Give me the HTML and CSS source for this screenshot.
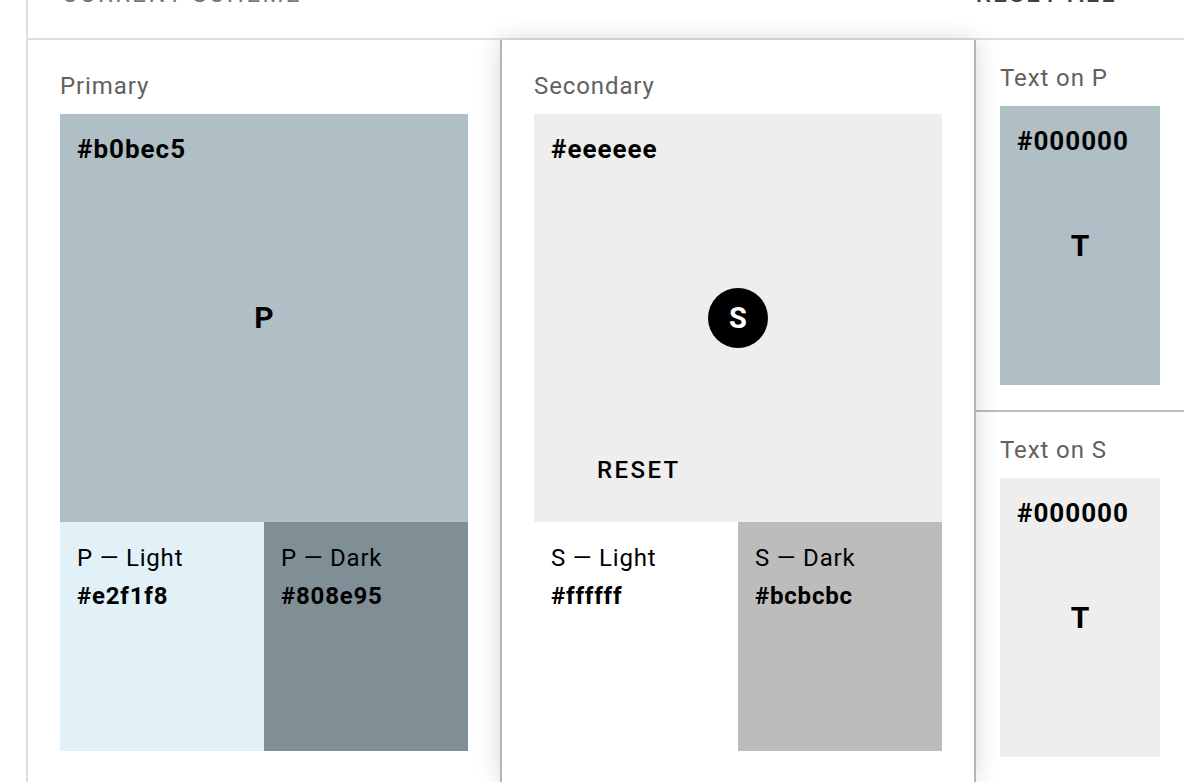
FILE: index.html
```html
<!DOCTYPE html>
<html lang="en">
<head>
<meta charset="utf-8">
<title>Current scheme</title>
<link rel="stylesheet" href="styles.css">
</head>
<body>
<div class="page">
  <header class="header">
    <span class="title">Current scheme</span>
    <span class="reset-all">Reset all</span>
  </header>
  <div class="columns">
    <section class="col col-primary">
      <div class="label">Primary</div>
      <div class="swatch-main c-primary">
        <span class="hex">#b0bec5</span>
        <span class="center-letter">P</span>
      </div>
      <div class="swatch-row">
        <div class="swatch-sub c-plight"><div>P — Light</div><div class="hex-b">#e2f1f8</div></div>
        <div class="swatch-sub c-pdark"><div>P — Dark</div><div class="hex-b">#808e95</div></div>
      </div>
    </section>
    <section class="col col-secondary">
      <div class="label">Secondary</div>
      <div class="swatch-main c-secondary">
        <span class="hex">#eeeeee</span>
        <span class="circle">S</span>
        <span class="reset">Reset</span>
      </div>
      <div class="swatch-row">
        <div class="swatch-sub c-slight"><div>S — Light</div><div class="hex-b">#ffffff</div></div>
        <div class="swatch-sub c-sdark"><div>S — Dark</div><div class="hex-b">#bcbcbc</div></div>
      </div>
    </section>
    <section class="col-text">
      <div class="text-block first">
        <div class="label">Text on P</div>
        <div class="swatch-text c-primary">
          <span class="hex">#000000</span>
          <span class="center-letter">T</span>
        </div>
      </div>
      <div class="text-block second">
        <div class="label">Text on S</div>
        <div class="swatch-text c-secondary">
          <span class="hex">#000000</span>
          <span class="center-letter">T</span>
        </div>
      </div>
    </section>
  </div>
</div>
</body>
</html>
```

FILE: styles.css
```css
* { box-sizing: border-box; }

html, body {
  margin: 0;
  padding: 0;
  background: #ffffff;
}

body {
  font-family: Roboto, "Noto Sans", "Liberation Sans", sans-serif;
  color: #000;
  height: 782px;
  overflow: hidden;
}

.page {
  margin-left: 26px;
  border-left: 2px solid #e0e0e0;
  height: 782px;
  overflow: hidden;
}

.header {
  height: 40px;
  border-bottom: 2px solid #e0e0e0;
  display: flex;
  justify-content: space-between;
  align-items: flex-start;
  padding: 0 67px 0 34px;
}

.title,
.reset-all {
  text-transform: uppercase;
  font-size: 24px;
  line-height: 32px;
  margin-top: -22px;
}

.title {
  color: #757575;
  letter-spacing: 2.4px;
}

.reset-all {
  color: #424242;
  font-weight: 500;
  letter-spacing: 2.5px;
}

.columns {
  display: flex;
  align-items: stretch;
  height: 742px;
}

.col {
  padding: 30px 32px 0;
}

.col-primary {
  width: 472px;
}

.col-secondary {
  width: 476px;
  border-left: 2px solid #b5b5b5;
  border-right: 2px solid #b5b5b5;
  box-shadow: 0 0 22px rgba(0, 0, 0, 0.16);
  position: relative;
  z-index: 1;
}

.col-text {
  flex: 1;
  display: flex;
  flex-direction: column;
}

.label {
  font-size: 24px;
  line-height: 32px;
  color: #616161;
  letter-spacing: 0.9px;
  margin-bottom: 12px;
}

.swatch-main {
  width: 408px;
  height: 408px;
  display: grid;
  grid-template: 1fr / 1fr;
}

.swatch-main > *,
.swatch-text > * {
  grid-area: 1 / 1;
}

.hex {
  align-self: start;
  justify-self: start;
  padding: 16px 17px 0;
  font-size: 26px;
  line-height: 38px;
  font-weight: 700;
  letter-spacing: 1px;
}

.center-letter {
  align-self: center;
  justify-self: center;
  font-size: 30px;
  font-weight: 700;
  line-height: 32px;
}

.circle {
  align-self: center;
  justify-self: center;
  width: 60px;
  height: 60px;
  border-radius: 50%;
  background: #000;
  color: #fff;
  font-size: 29px;
  font-weight: 700;
  display: flex;
  align-items: center;
  justify-content: center;
}

.reset {
  align-self: end;
  justify-self: start;
  margin: 0 0 36px 63px;
  font-size: 24px;
  line-height: 32px;
  font-weight: 500;
  text-transform: uppercase;
  letter-spacing: 2.4px;
}

.swatch-row {
  display: flex;
  height: 229px;
}

.swatch-sub {
  width: 204px;
  padding: 17px 17px;
  font-size: 24px;
  line-height: 38px;
  letter-spacing: 0.8px;
}

.hex-b {
  font-weight: 700;
}

.text-block {
  padding-left: 24px;
}

.text-block.first {
  padding-top: 22px;
  padding-bottom: 25px;
  border-bottom: 2px solid #bdbdbd;
}

.text-block.second {
  padding-top: 22px;
}

.text-block .label {
  margin-bottom: 12px;
}

.swatch-text {
  width: 160px;
  height: 279px;
  display: grid;
  grid-template: 1fr / 1fr;
}

.c-primary { background: #b0bec5; }
.c-plight { background: #e2f1f8; }
.c-pdark { background: #808e95; }
.c-secondary { background: #eeeeee; }
.c-slight { background: #ffffff; }
.c-sdark { background: #bcbcbc; }
```
